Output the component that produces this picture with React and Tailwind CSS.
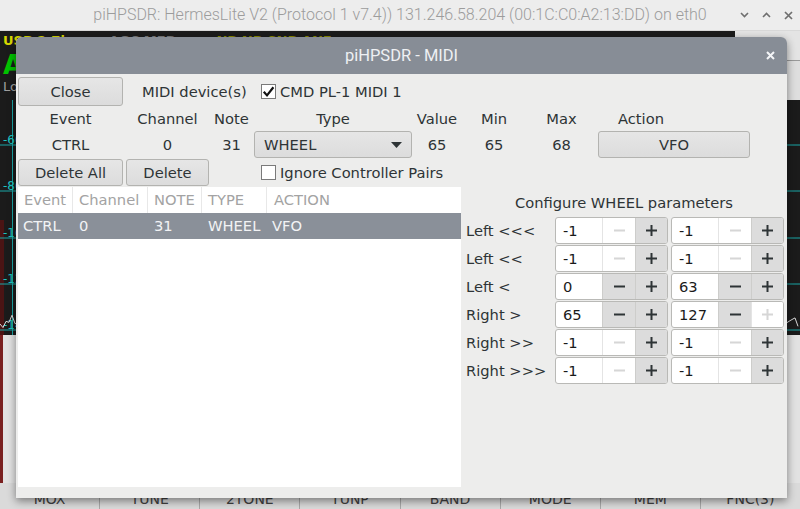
import React from "react";

const TXT = "#2e3436";

function MinusIcon({ on }) {
  return (
    <svg width="11" height="11" viewBox="0 0 11 11">
      <rect x="0" y="4.5" width="11" height="2" fill={on ? TXT : "#d6d6d6"} />
    </svg>
  );
}

function PlusIcon({ on }) {
  const c = on ? TXT : "#d6d6d6";
  return (
    <svg width="11" height="11" viewBox="0 0 11 11">
      <rect x="0" y="4.5" width="11" height="2" fill={c} />
      <rect x="4.5" y="0" width="2" height="11" fill={c} />
    </svg>
  );
}

function Spin({ v, m, p }) {
  return (
    <div className="flex h-[27px] w-[113px] overflow-hidden rounded-[3px] border border-[#b9b9b6] bg-white">
      <div className="flex w-[46px] items-center pl-[7px] text-[#1a1a1a]">{v}</div>
      <div
        className={
          m
            ? "flex w-[33px] items-center justify-center border-l border-[#cdcdcb] bg-[#dcdcdc]"
            : "flex w-[33px] items-center justify-center border-l border-[#e4e4e4] bg-white"
        }
      >
        <MinusIcon on={m} />
      </div>
      <div
        className={
          p
            ? "flex flex-1 items-center justify-center border-l border-[#cdcdcb] bg-[#dcdcdc]"
            : "flex flex-1 items-center justify-center border-l border-[#e4e4e4] bg-white"
        }
      >
        <PlusIcon on={p} />
      </div>
    </div>
  );
}

function Btn({ children, className }) {
  return (
    <div
      className={
        "flex items-center justify-center rounded-[3px] border border-[#b3b3b0] bg-gradient-to-b from-[#e6e6e6] to-[#dcdcdc] text-[#2e3436] " +
        (className || "")
      }
    >
      {children}
    </div>
  );
}

function Check({ checked }) {
  return (
    <div className="flex h-[15px] w-[15px] items-center justify-center border border-[#7a7a7a] bg-white">
      {checked && (
        <svg width="13" height="13" viewBox="0 0 13 13">
          <path d="M1.8 6.8 L5 10.4 L11.4 2.2" stroke="#111" strokeWidth="2.2" fill="none" />
        </svg>
      )}
    </div>
  );
}

const params = [
  ["Left <<<", ["-1", false, true], ["-1", false, true]],
  ["Left <<", ["-1", false, true], ["-1", false, true]],
  ["Left <", ["0", true, true], ["63", true, true]],
  ["Right >", ["65", true, true], ["127", true, false]],
  ["Right >>", ["-1", false, true], ["-1", false, true]],
  ["Right >>>", ["-1", false, true], ["-1", false, true]],
];

const cols = "grid grid-cols-[105px_83px_39px_158px_44px_64px_65px_153px] gap-x-[3px]";

function Spectrum() {
  const pts = [];
  for (let x = 0; x <= 800; x += 3) {
    const n = Math.sin(x * 0.9) * 3 + Math.sin(x * 0.37) * 4 + Math.cos(x * 1.7) * 2;
    pts.push(`${x},${(222 + n).toFixed(1)}`);
  }
  const lines = [45, 91, 138, 184, 230];
  const labels = ["-60", "-80", "-10", "-12", "-14"];
  return (
    <svg width="800" height="235" viewBox="0 0 800 235" className="block">
      <rect x="0" y="0" width="800" height="235" fill="#1b1b1b" />
      <rect x="0" y="120" width="4" height="115" fill="#4a1414" />
      {lines.map((y) => (
        <line key={y} x1="0" x2="800" y1={y} y2={y} stroke="#1aa7a7" strokeWidth="1" />
      ))}
      <line x1="12.5" x2="12.5" y1="0" y2="235" stroke="#1aa7a7" strokeWidth="1" />
      {labels.map((t, i) => (
        <text key={t} x="3" y={lines[i] - 1} fill="#1cc3c3" fontSize="12" fontFamily="DejaVu Sans, sans-serif">
          {t}
        </text>
      ))}
      <polyline points={pts.join(" ")} fill="none" stroke="#d8d8d8" strokeWidth="1" />
    </svg>
  );
}

export default function App() {
  return (
    <div className="relative h-[509px] w-[800px] overflow-hidden bg-[#1b1b1b] font-['DejaVu_Sans',sans-serif] text-[14.7px] leading-[18px] text-[#2e3436]">
      {/* main window title bar */}
      <div className="grid h-[31px] grid-cols-[1fr_auto_1fr] items-center border-b border-[#d9d9d9] bg-[#ededed]">
        <div />
        <div className="font-['Roboto',sans-serif] text-[16px] font-light text-[#9c9c9c]">
          piHPSDR: HermesLite V2 (Protocol 1 v7.4)) 131.246.58.204 (00:1C:C0:A2:13:DD) on eth0
        </div>
        <div className="flex items-center justify-end gap-[13px] pr-[7px]">
          <svg width="9" height="6" viewBox="0 0 9 6">
            <path d="M1 1 L4.5 4.5 L8 1" stroke="#6f6f6f" strokeWidth="1.6" fill="none" />
          </svg>
          <svg width="9" height="6" viewBox="0 0 9 6">
            <path d="M1 5 L4.5 1.5 L8 5" stroke="#6f6f6f" strokeWidth="1.6" fill="none" />
          </svg>
          <svg width="9" height="9" viewBox="0 0 9 9">
            <path d="M1 1 L8 8 M8 1 L1 8" stroke="#6f6f6f" strokeWidth="1.7" fill="none" />
          </svg>
        </div>
      </div>

      {/* background application */}
      <div className="flex h-[69px]">
        <div className="flex flex-1 flex-col bg-[#1b1b1b] pl-[3px] pt-[2px]">
          <div className="flex gap-[40px] text-[13px] font-bold leading-[16px] text-[#d8d800]">
            <span>USB 2.7k</span>
            <span className="text-[#7a7a7a]">AGC MED</span>
            <span className="text-[#8a8a00]">NB NR SNB ANF</span>
          </div>
          <div className="mt-[2px] text-[26px] font-bold leading-[28px] text-[#00c400]">A 14.074.000</div>
          <div className="text-[13px] leading-[16px] text-[#a0a0a0]">Lock</div>
        </div>
        <div className="flex w-[65px] flex-col bg-[#e4e4e4]">
          <div className="h-[30px] border-b border-[#9a9a9a]" />
          <div className="flex-1 bg-[#dedede]" />
        </div>
      </div>
      <Spectrum />
      <div className="flex h-[148px] bg-[#dcdcdc]">
        <div className="w-[3px] bg-[#7a2020]" />
        <div className="flex-1 bg-[#e2e2e2]" />
      </div>
      <div className="flex h-[26px] bg-[#dadada] text-[14px] leading-[17px] text-[#404040]">
        {["MOX", "TUNE", "2TONE", "TUNP", "BAND", "MODE", "MEM", "FNC(3)"].map((t, i) => (
          <div
            key={t}
            className={
              i < 7
                ? "flex flex-1 justify-center border-r border-[#a8a8a8] pt-[8px]"
                : "flex flex-1 justify-center pt-[8px]"
            }
          >
            {t}
          </div>
        ))}
      </div>

      {/* MIDI dialog */}
      <div className="absolute left-[16px] top-[37px] flex h-[461px] w-[771px] flex-col overflow-hidden rounded-t-[6px] bg-[#ededec] shadow-[0_3px_9px_rgba(0,0,0,0.45)]">
        <div className="grid h-[37px] grid-cols-[1fr_auto_1fr] items-center bg-[#878d96]">
          <div />
          <div className="font-['Roboto',sans-serif] text-[16.5px] text-[#eef0f3]">piHPSDR - MIDI</div>
          <div className="flex justify-end pr-[12px]">
            <svg width="9" height="9" viewBox="0 0 9 9">
              <path d="M1 1 L8 8 M8 1 L1 8" stroke="#f4f5f7" strokeWidth="2" fill="none" />
            </svg>
          </div>
        </div>

        <div className="flex flex-1 flex-col pl-[2px] pt-[3px]">
          {/* row 1 */}
          <div className={cols + " h-[29px]"}>
            <Btn className="h-[29px]">Close</Btn>
            <div className="col-span-2 flex items-center pl-[16px]">MIDI device(s)</div>
            <div className="col-span-3 flex items-center gap-[4px] pl-[7px]">
              <Check checked />
              <span>CMD PL-1 MIDI 1</span>
            </div>
          </div>
          {/* row 2 */}
          <div className={cols + " h-[25px] items-center text-center"}>
            <div>Event</div>
            <div>Channel</div>
            <div>Note</div>
            <div>Type</div>
            <div>Value</div>
            <div>Min</div>
            <div>Max</div>
            <div className="pl-[21px] text-left">Action</div>
          </div>
          {/* row 3 */}
          <div className={cols + " h-[27px] items-center text-center"}>
            <div>CTRL</div>
            <div>0</div>
            <div>31</div>
            <div className="flex h-[27px] items-center justify-between rounded-[3px] border border-[#b3b3b0] bg-gradient-to-b from-[#e6e6e6] to-[#dcdcdc] pl-[9px] pr-[9px]">
              <span>WHEEL</span>
              <svg width="11" height="6" viewBox="0 0 11 6">
                <path d="M0 0 L11 0 L5.5 6 Z" fill={TXT} />
              </svg>
            </div>
            <div>65</div>
            <div>65</div>
            <div>68</div>
            <Btn className="ml-[1px] h-[27px]">VFO</Btn>
          </div>
          {/* row 4 */}
          <div className={cols + " mt-[1px] h-[27px]"}>
            <Btn className="h-[27px]">Delete All</Btn>
            <Btn className="h-[27px]">Delete</Btn>
            <div />
            <div className="col-span-4 flex items-center gap-[4px] pl-[7px]">
              <Check />
              <span>Ignore Controller Pairs</span>
            </div>
          </div>

          {/* lower part */}
          <div className="mt-[1px] flex">
            <div className="h-[300px] w-[443px] bg-white">
              <div className="flex h-[26px] items-stretch text-[#a3a3a3]">
                <div className="flex w-[55px] items-center border-r border-[#e8e8e8] pl-[6px]">Event</div>
                <div className="flex w-[75px] items-center border-r border-[#e8e8e8] pl-[6px]">Channel</div>
                <div className="flex w-[54px] items-center border-r border-[#e8e8e8] pl-[6px]">NOTE</div>
                <div className="flex w-[65px] items-center border-r border-[#e8e8e8] pl-[6px]">TYPE</div>
                <div className="flex flex-1 items-center pl-[7px]">ACTION</div>
              </div>
              <div className="flex h-[26px] items-center bg-[#8a9099] text-[#f2f3f5]">
                <div className="w-[55px] pl-[5px]">CTRL</div>
                <div className="w-[75px] pl-[6px]">0</div>
                <div className="w-[54px] pl-[6px]">31</div>
                <div className="w-[65px] pl-[6px]">WHEEL</div>
                <div className="flex-1 pl-[5px]">VFO</div>
              </div>
            </div>
            <div className="flex flex-1 flex-col">
              <div className="flex h-[30px] items-center justify-center pt-[1px]">Configure WHEEL parameters</div>
              <div className="flex flex-col gap-[1px]">
                {params.map(([label, a, b]) => (
                  <div key={label} className="flex h-[27px] items-center">
                    <div className="w-[94px] pl-[5px]">{label}</div>
                    <Spin v={a[0]} m={a[1]} p={a[2]} />
                    <div className="w-[3px]" />
                    <Spin v={b[0]} m={b[1]} p={b[2]} />
                  </div>
                ))}
              </div>
            </div>
          </div>
        </div>
      </div>
    </div>
  );
}
